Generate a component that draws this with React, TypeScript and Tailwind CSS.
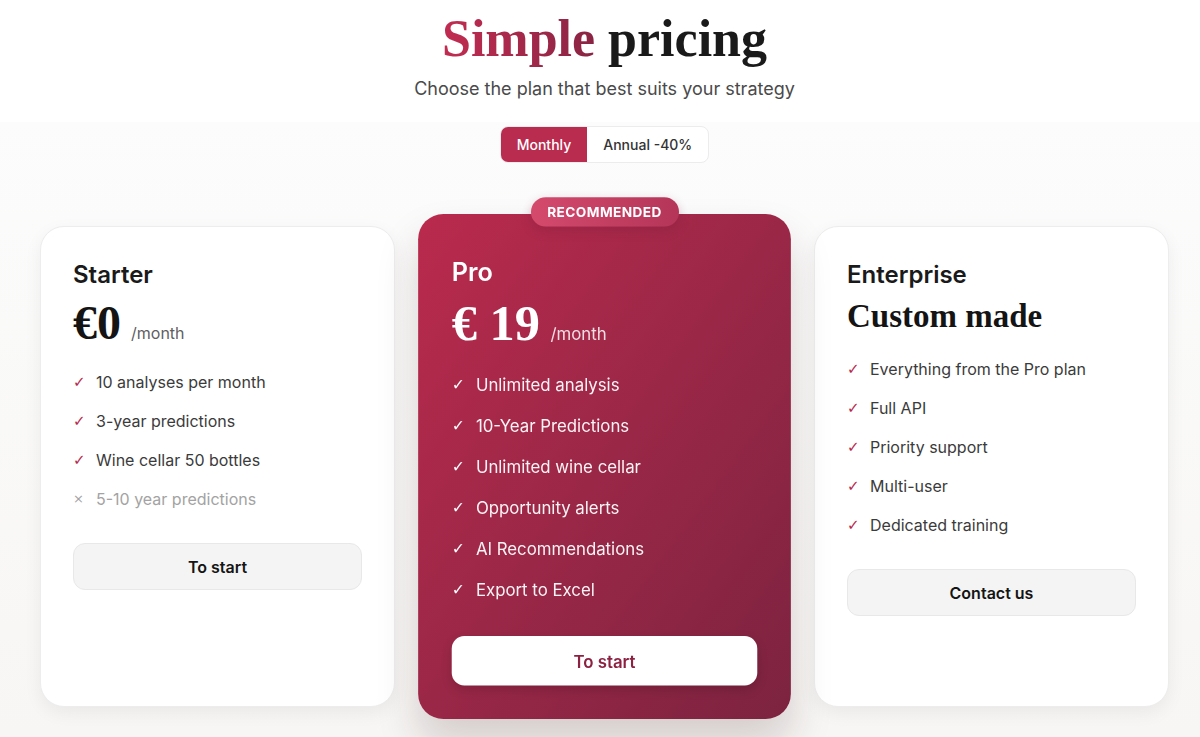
import React from "react";

type Feature = { label: string; included?: boolean };

const starter: Feature[] = [
  { label: "10 analyses per month" },
  { label: "3-year predictions" },
  { label: "Wine cellar 50 bottles" },
  { label: "5-10 year predictions", included: false },
];

const pro: Feature[] = [
  { label: "Unlimited analysis" },
  { label: "10-Year Predictions" },
  { label: "Unlimited wine cellar" },
  { label: "Opportunity alerts" },
  { label: "AI Recommendations" },
  { label: "Export to Excel" },
];

const enterprise: Feature[] = [
  { label: "Everything from the Pro plan" },
  { label: "Full API" },
  { label: "Priority support" },
  { label: "Multi-user" },
  { label: "Dedicated training" },
];

const FeatureList = ({ items, light = false }: { items: Feature[]; light?: boolean }) => (
  <ul className="flex flex-col gap-[15px]">
    {items.map((f) => {
      const off = f.included === false;
      return (
        <li key={f.label} className="flex h-6 items-center gap-3 text-base">
          {off ? (
            <span className="w-[11px] font-['DejaVu_Sans',sans-serif] text-[13px] text-[#a3a3a3]">×</span>
          ) : (
            <span
              className={`w-[11px] font-['DejaVu_Sans',sans-serif] text-[15px] font-bold ${
                light ? "text-white" : "text-[#b8294b]"
              }`}
            >
              ✓
            </span>
          )}
          <span className={off ? "text-[#a3a3a3]" : light ? "text-white/95" : "text-[#3b3b3b]"}>{f.label}</span>
        </li>
      );
    })}
  </ul>
);

const serif = "font-['Liberation_Serif',serif] font-bold";

export default function App() {
  return (
    <div className="flex min-h-screen flex-col bg-white font-['Inter',sans-serif] text-[#1a1a1a]">
      {/* Header */}
      <header className="pl-[9px] pt-2 text-center">
        <h1 className={`${serif} text-[52px] leading-[62px]`}>
          <span className="bg-gradient-to-r from-[#c22c51] to-[#8a2444] bg-clip-text text-transparent">Simple</span>{" "}
          <span className="text-[#1a1a1a]">pricing</span>
        </h1>
        <p className="mt-[5px] text-lg leading-7 text-[#4a4a4a]">Choose the plan that best suits your strategy</p>
      </header>

      <section className="mt-[19px] flex-1 bg-gradient-to-b from-[#fcfcfc] to-[#f7f6f4] pl-[9px] pt-1">
        {/* Billing toggle */}
        <div className="mx-auto flex w-fit overflow-hidden rounded-lg border border-[#ececec] bg-white">
          <button className="h-[35px] bg-[#b92c50] px-4 text-sm font-medium text-white">Monthly</button>
          <button className="h-[35px] px-4 text-sm font-medium text-[#333]">Annual -40%</button>
        </div>

        {/* Cards */}
        <div className="flex justify-center gap-8 pt-[63px]">
          {/* Starter */}
          <div className="flex w-[355px] flex-col rounded-3xl border border-[#ededed] bg-white px-8 pt-8 shadow-[0_6px_18px_rgba(0,0,0,0.06)]">
            <h3 className="text-2xl font-semibold leading-8">Starter</h3>
            <div className="mt-[10px] flex h-[44px] items-baseline gap-[10px]">
              <span className={`${serif} text-[48px] leading-[44px] text-[#141414]`}>€0</span>
              <span className="text-base text-[#5f5f5f]">/month</span>
            </div>
            <div className="mt-[25px]">
              <FeatureList items={starter} />
            </div>
            <button className="mt-8 h-[47px] w-full rounded-xl border border-[#e8e8e8] bg-[#f4f4f4] text-base font-semibold text-[#141414]">
              To start
            </button>
          </div>

          {/* Pro */}
          <div className="relative z-10 flex w-[355px] scale-105 flex-col rounded-3xl bg-gradient-to-br from-[#ba2a4d] to-[#7c2340] px-8 pb-8 pt-10 text-white shadow-[0_24px_40px_rgba(60,20,30,0.18)]">
            <div className="absolute left-1/2 top-[-2px] -translate-x-1/2 -translate-y-1/2 whitespace-nowrap rounded-full bg-gradient-to-r from-[#d44a6d] to-[#b43558] px-4 py-[5px] text-[13px] font-bold uppercase leading-[18px] tracking-[0.03em] text-white shadow-[0_4px_10px_rgba(120,30,60,0.3)]">
              Recommended
            </div>
            <h3 className="text-2xl font-semibold leading-8">Pro</h3>
            <div className="mt-[10px] flex h-[44px] items-baseline gap-[10px]">
              <span className={`${serif} text-[48px] leading-[44px]`}>€ 19</span>
              <span className="text-base text-white/85">/month</span>
            </div>
            <div className="mt-[25px]">
              <FeatureList items={pro} light />
            </div>
            <button className="mt-8 h-[47px] w-full rounded-xl bg-white text-base font-semibold text-[#8c2142] shadow-[0_4px_10px_rgba(0,0,0,0.15)]">
              To start
            </button>
          </div>

          {/* Enterprise */}
          <div className="flex w-[355px] flex-col rounded-3xl border border-[#ededed] bg-white px-8 pt-8 shadow-[0_6px_18px_rgba(0,0,0,0.06)]">
            <h3 className="text-2xl font-semibold leading-8">Enterprise</h3>
            <div className={`${serif} mt-2 text-[33px] leading-[34px] text-[#141414]`}>Custom made</div>
            <div className="mt-6">
              <FeatureList items={enterprise} />
            </div>
            <button className="mt-8 h-[47px] w-full rounded-xl border border-[#e8e8e8] bg-[#f4f4f4] text-base font-semibold text-[#141414]">
              Contact us
            </button>
          </div>
        </div>
      </section>
    </div>
  );
}
